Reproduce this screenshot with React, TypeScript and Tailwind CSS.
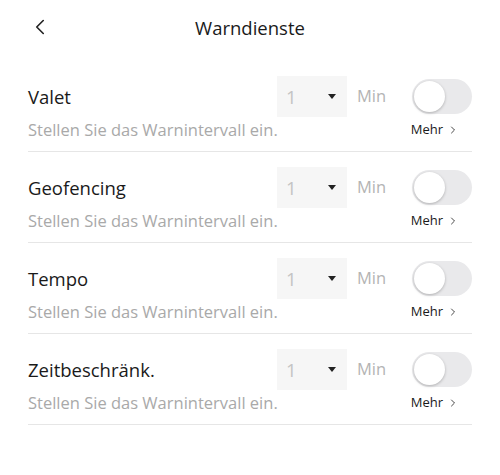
import { ChevronLeft, ChevronRight } from 'lucide-react'

type Alert = { key: string; label: string }

const alerts: Alert[] = [
  { key: 'valet', label: 'Valet' },
  { key: 'geo', label: 'Geofencing' },
  { key: 'tempo', label: 'Tempo' },
  { key: 'zeit', label: 'Zeitbeschränk.' },
]

function Toggle() {
  return (
    <div className="w-[60px] h-[35px] rounded-full bg-[#e9e9eb] p-[2px] flex items-center">
      <div className="w-[31px] h-[31px] rounded-full bg-white shadow-[0_1px_3px_rgba(0,0,0,0.25)]" />
    </div>
  )
}

function AlertRow({ label }: { label: string }) {
  return (
    <div className="pt-[15px] pb-[8px] border-b border-[#e6e6e6]">
      {/* Top line */}
      <div className="flex items-center h-[41px]">
        <span className="flex-1 text-[18.5px] text-[#1a1a1a]">{label}</span>
        <div className="w-[70px] h-[41px] bg-[#f6f6f6] flex items-center justify-between pl-[9px] pr-[11px]">
          <span className="text-[18.5px] text-[#c4c4c4]">1</span>
          <span className="w-0 h-0 border-l-[4px] border-r-[4px] border-t-[5px] border-l-transparent border-r-transparent border-t-[#222]" />
        </div>
        <span className="ml-[10px] w-[30px] text-[16.5px] text-[#b4b4b4]">Min</span>
        <div className="ml-[25px]">
          <Toggle />
        </div>
      </div>
      {/* Subtitle */}
      <div className="flex items-center h-[26px]">
        <span className="flex-1 text-[16.5px] text-[#a9a9a9]">Stellen Sie das Warnintervall ein.</span>
        <span className="mr-[13px] flex items-center text-[13px] text-[#1a1a1a]">
          Mehr
          <ChevronRight size={12} strokeWidth={1.6} className="ml-[4px]" />
        </span>
      </div>
    </div>
  )
}

export default function App() {
  return (
    <div className="w-[500px] h-[475px] bg-white font-['Open_Sans',sans-serif]">
      {/* Header */}
      <div className="relative h-[55px] flex items-center justify-center">
        <ChevronLeft size={26} strokeWidth={1.5} className="absolute left-[27px] top-[14px] text-[#222]" />
        <h1 className="text-[18.5px] text-[#1a1a1a]">Warndienste</h1>
      </div>

      <div className="px-[28px] pt-[6px]">
        {alerts.map((a) => (
          <AlertRow key={a.key} label={a.label} />
        ))}
      </div>
    </div>
  )
}
